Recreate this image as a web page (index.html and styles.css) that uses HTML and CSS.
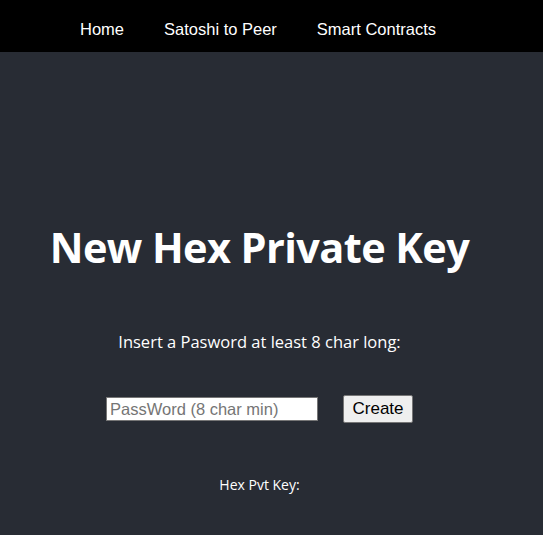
FILE: index.html
```html
<!DOCTYPE html>
<html>
<head>
<meta charset="utf-8">
<link rel="stylesheet" href="styles.css">
</head>
<body>
<nav class="nav">
  <a class="nav-link" href="#">Home</a>
  <a class="nav-link" href="#">Satoshi to Peer</a>
  <a class="nav-link" href="#">Smart Contracts</a>
</nav>
<main class="app">
  <h1 class="title">New Hex Private Key</h1>
  <p class="prompt">Insert a Pasword at least 8 char long:</p>
  <div class="form">
    <input class="pw" type="text" placeholder="PassWord (8 char min)">
    <button class="btn">Create</button>
  </div>
  <p class="result">Hex Pvt Key:</p>
</main>
</body>
</html>
```
FILE: styles.css
```css
html, body {
  margin: 0;
  padding: 0;
  background: #282c34;
  height: 100%;
}
.nav {
  background: #000;
  height: 52px;
  display: flex;
  align-items: center;
  gap: 40px;
  padding: 6px 0 0 80px;
  box-sizing: border-box;
}
.nav-link {
  color: #fff;
  text-decoration: none;
  font-family: "Liberation Sans", Arial, sans-serif;
  font-size: 16.5px;
}
.app {
  width: 519px;
  display: flex;
  flex-direction: column;
  align-items: center;
  color: #fff;
  font-family: "Open Sans", "Noto Sans", sans-serif;
}
.title {
  margin: 170px 0 0;
  font-size: 41.5px;
  font-weight: 700;
  line-height: 50px;
  letter-spacing: -0.6px;
}
.prompt {
  margin: 59px 0 0;
  font-size: 16.5px;
  line-height: 22px;
}
.form {
  margin-top: 42px;
  display: flex;
  align-items: center;
  gap: 25px;
}
.pw {
  width: 212px;
  height: 24px;
  box-sizing: border-box;
  border: 1px solid #767676;
  padding: 1px 3px;
  font-family: "Liberation Sans", Arial, sans-serif;
  font-size: 16.5px;
  background: #fff;
}
.pw::placeholder {
  color: #757575;
}
.btn {
  width: 70px;
  height: 28px;
  box-sizing: border-box;
  border: 1px solid #767676;
  border-radius: 2px;
  background: #efefef;
  font-family: "Liberation Sans", Arial, sans-serif;
  font-size: 17px;
  color: #000;
  padding: 0;
}
.result {
  margin: 52px 0 0;
  font-size: 14px;
  line-height: 20px;
}
```
